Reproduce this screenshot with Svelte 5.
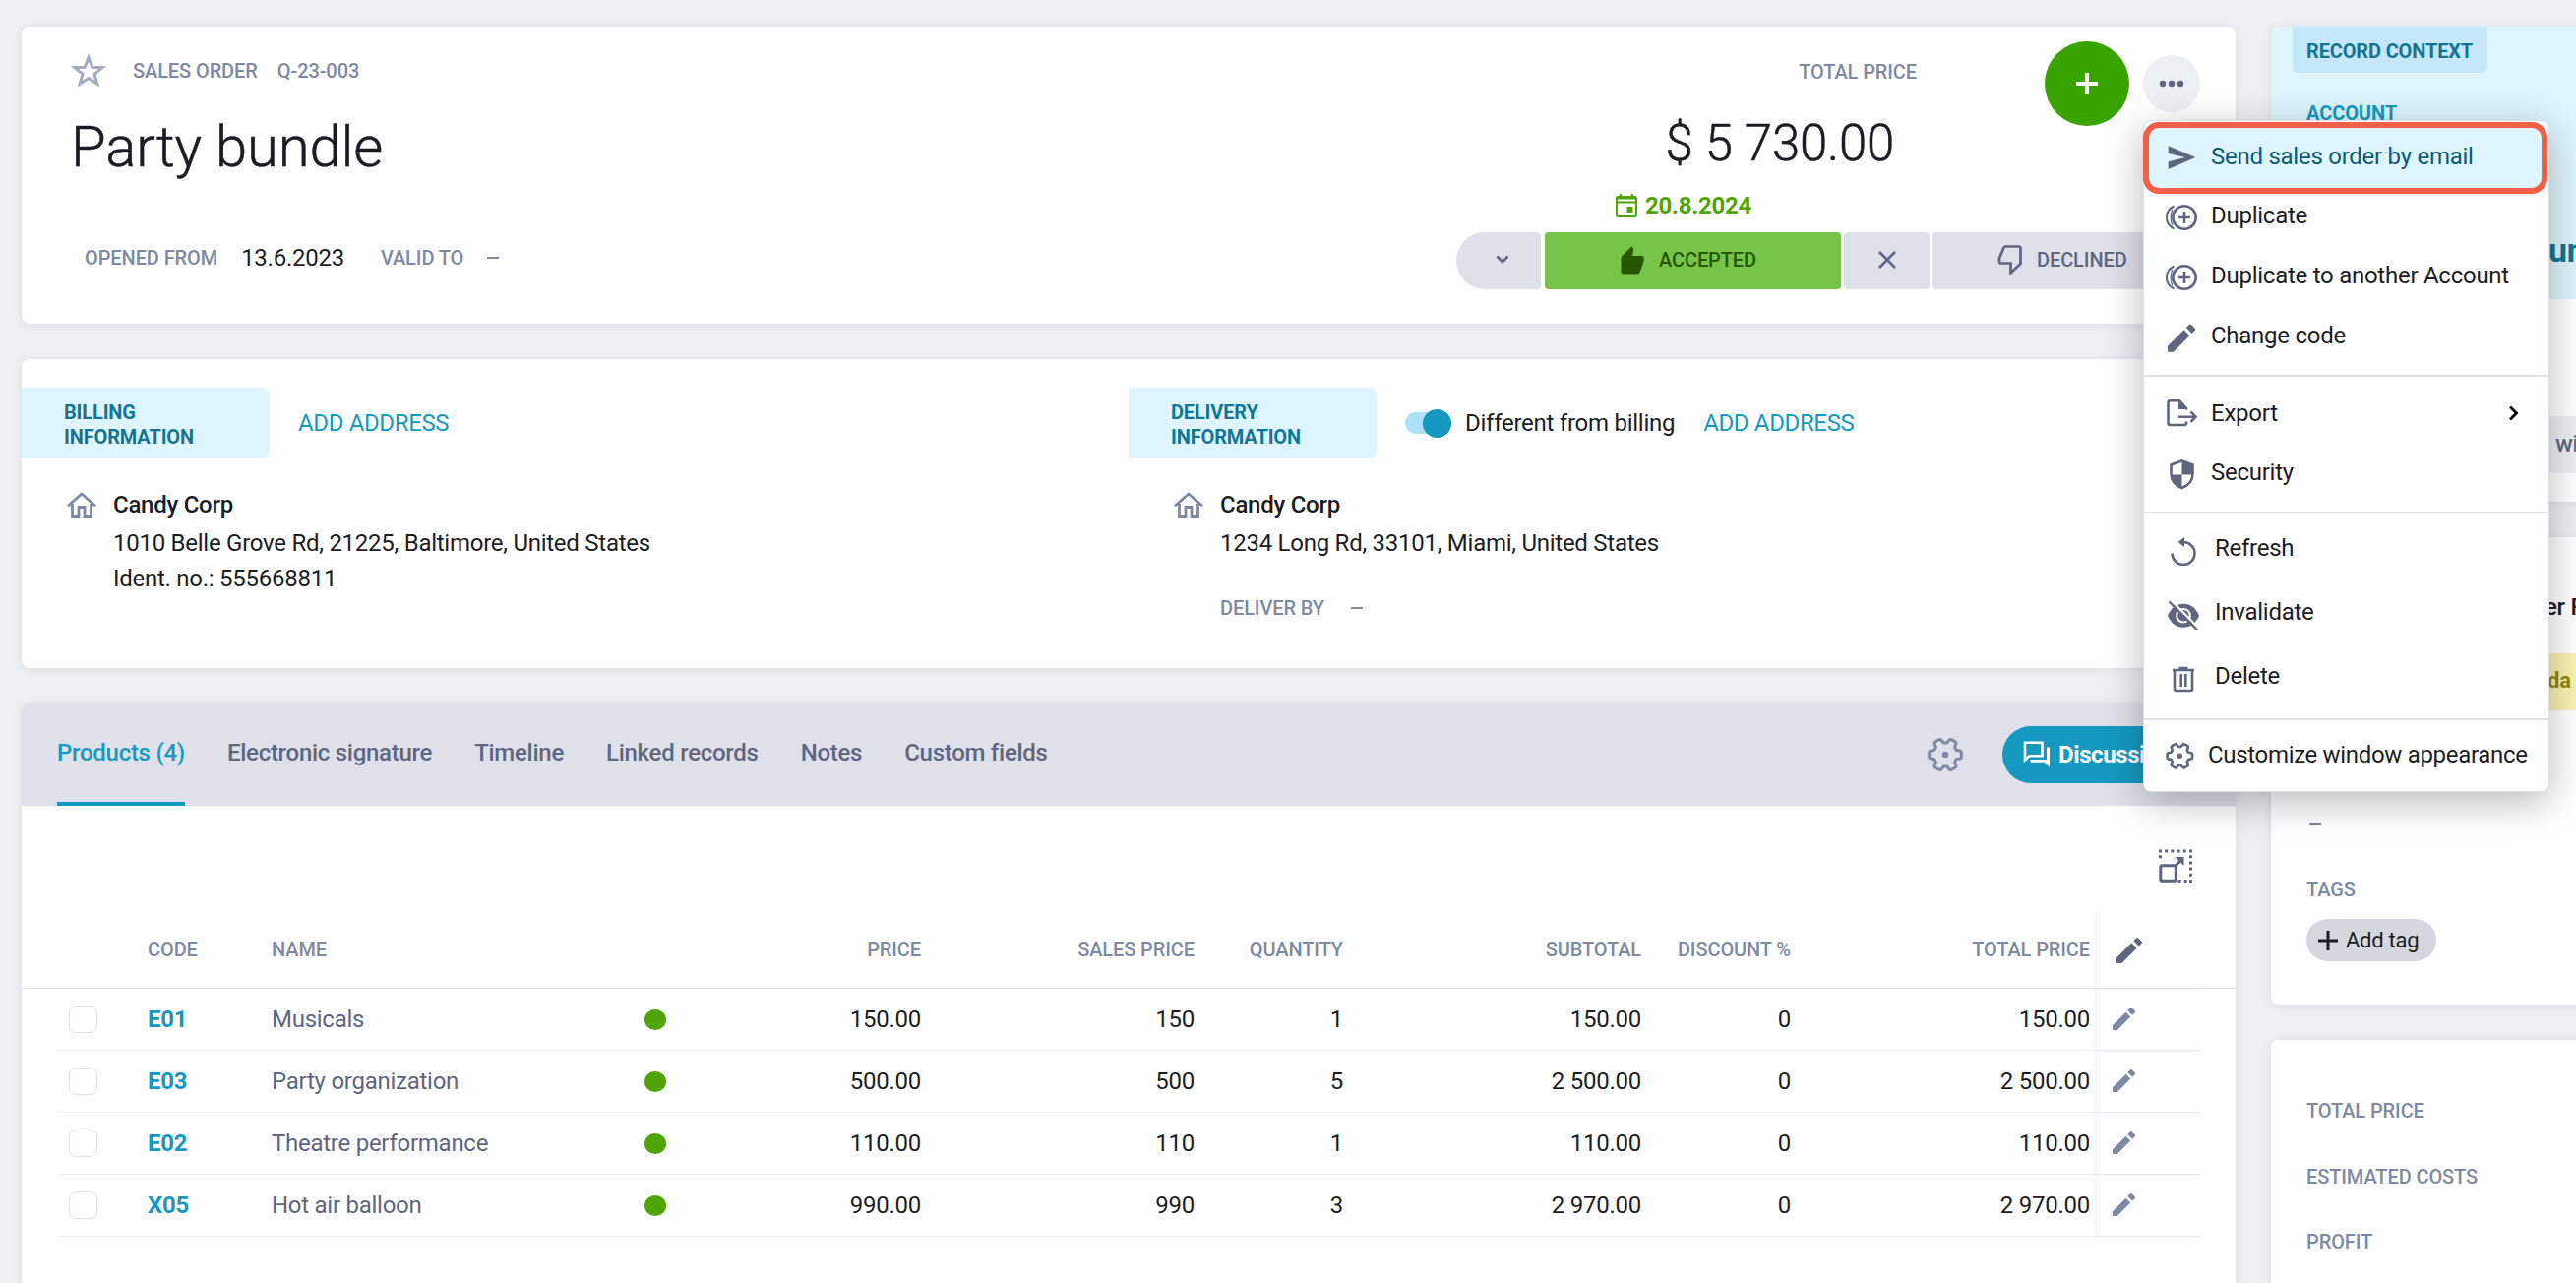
<script>
  const tabs = ["Products (4)", "Electronic signature", "Timeline", "Linked records", "Notes", "Custom fields"];
  let activeTab = $state(0);

  const products = [
    { code: "E01", name: "Musicals", price: "150.00", sales: "150", qty: 1, subtotal: "150.00", discount: 0, total: "150.00" },
    { code: "E03", name: "Party organization", price: "500.00", sales: "500", qty: 5, subtotal: "2 500.00", discount: 0, total: "2 500.00" },
    { code: "E02", name: "Theatre performance", price: "110.00", sales: "110", qty: 1, subtotal: "110.00", discount: 0, total: "110.00" },
    { code: "X05", name: "Hot air balloon", price: "990.00", sales: "990", qty: 3, subtotal: "2 970.00", discount: 0, total: "2 970.00" },
  ];

  const groups = [
    {
      cls: "main-actions",
      items: [
        { icon: "send", label: "Send sales order by email", active: true },
        { icon: "duplicate", label: "Duplicate" },
        { icon: "duplicate", label: "Duplicate to another Account" },
        { icon: "edit", label: "Change code" },
      ],
    },
    {
      cls: "data-actions",
      items: [
        { icon: "export", label: "Export", sub: true },
        { icon: "shield", label: "Security" },
      ],
    },
    {
      cls: "state-actions",
      items: [
        { icon: "refresh", label: "Refresh" },
        { icon: "hide", label: "Invalidate" },
        { icon: "trash", label: "Delete" },
      ],
    },
    { cls: "view-actions", items: [{ icon: "gear", label: "Customize window appearance" }] },
  ];

  // outline of the cog: six wide teeth with a notch on top
  function cog(r, depth) {
    let d = "";
    for (let i = 0; i < 120; i++) {
      const a = (i / 120) * Math.PI * 2;
      const k = Math.max(-1, Math.min(1, 0.5 - 2.2 * Math.cos(a * 6)));
      const rad = r + depth * k;
      d += (i ? "L" : "M") + (rad * Math.sin(a)).toFixed(2) + " " + (-rad * Math.cos(a)).toFixed(2);
    }
    return d + "Z";
  }
</script>

{#snippet pencil(size)}
  <svg width={size} height={size} viewBox="3 3 18 18" fill="currentColor">
    <path d="M3 17.25V21h3.75L17.3 10.45l-3.75-3.75L3 17.25zM20.71 7.04a1 1 0 0 0 0-1.41l-2.34-2.34a1 1 0 0 0-1.41 0L15 5.25 18.75 9l1.96-1.96z" />
  </svg>
{/snippet}

{#snippet house()}
  <svg class="house" width="30" height="26" viewBox="0 0 30 26" fill="none" stroke="currentColor" stroke-width="2.8">
    <path d="M1 14.2 15 2l14 12.2M5.5 12v12.500h6.500v-9h6v9h6.500V12" />
  </svg>
{/snippet}

{#snippet menuIcon(name)}
  <svg width="36" height="36" viewBox="0 0 36 36" fill="none" stroke="currentColor" stroke-width="2.6">
    {#if name === "send"}
      <path d="M3.700 7.300 31.300 19 3.700 31V23.200L21 19 3.700 15z" fill="currentColor" stroke="none" />
    {:else if name === "duplicate"}
      <circle cx="20" cy="20" r="11.700" />
      <path d="M20 14v12M14 20h12" />
      <path d="M9.500 8.500C4 11 2 15.500 2 20s2 9 7.500 11.500" stroke-width="2" />
      <path d="M8 11.500C5.500 16 5.500 24 8 28.500" stroke-width="1.200" />
    {:else if name === "edit"}
      <g transform="translate(3 6.500) scale(1.570) translate(-3 -3)" fill="currentColor" stroke="none">
        <path d="M3 17.250V21h3.750L17.300 10.450l-3.750-3.750L3 17.250zM20.710 7.040a1 1 0 0 0 0-1.410l-2.340-2.340a1 1 0 0 0-1.410 0L15 5.250 18.750 9l1.960-1.960z" />
      </g>
    {:else if name === "export"}
      <path d="M22 14.500V13l-7-7.700H5.500a2 2 0 0 0-2 2V28a2 2 0 0 0 2 2H20a2 2 0 0 0 2-2v-1.500" />
      <path d="M14 5v9h9z" fill="currentColor" stroke="none" />
      <path d="M14 21.700h17M26.500 16.500l5 5.200-5 5.200" />
    {:else if name === "shield"}
      <path d="M17.500 6.500 28.500 10.500v9c0 7-4.500 12-11 14.500-6.500-2.500-11-7.500-11-14.500v-9z" />
      <path d="M17.500 6v14.500h11.300V10.500zM17.500 20.500V34c-6-2-10.500-7-11.200-13.500z" fill="currentColor" stroke="none" />
    {:else if name === "refresh"}
      <path d="M7.500 23.500a11.500 11.500 0 1 0 11.500-11.500" />
      <path d="M20 7v10l-6.500-5z" fill="currentColor" stroke="none" />
    {:else if name === "hide"}
      <path d="M3 21.700C6 14 12 9.700 19 9.700s13 4.300 16 12c-3 7.700-9 12-16 12S6 29.400 3 21.700z" fill="currentColor" stroke="none" />
      <circle cx="19" cy="21.700" r="6.800" stroke="#fff" stroke-width="2" />
      <path d="M6.500 6 34.500 34.500" stroke="#fff" stroke-width="2.400" />
      <path d="M4.500 7.500 33 36.300" stroke-width="2.400" />
    {:else if name === "trash"}
      <path d="M10 13v18.500c0 1 .500 1.500 1.500 1.500h15c1 0 1.500-.500 1.500-1.500V13M8 12h22M14.500 10h9M16.700 16v13M21.300 16v13" />
    {:else if name === "gear"}
      <g transform="translate(15.300 19.300)">
        <path d={cog(11.100, 1.700)} stroke-linejoin="round" />
        <circle r="2.700" fill="currentColor" stroke="none" />
      </g>
    {/if}
  </svg>
{/snippet}

<div class="page">
  <main>
    <section class="card header">
      <div class="identity">
        <div class="crumb">
          <svg width="36" height="36" viewBox="0 0 36 36" fill="none" stroke="#a3abbe" stroke-width="3">
            <path d="M18 4.500 21.700 14.300 32 14.700 24 21.200 26.800 31.200 18 25.500 9.200 31.200 12 21.200 4 14.700 14.300 14.300z" />
          </svg>
          <span class="label">SALES ORDER</span>
          <span class="label">Q-23-003</span>
        </div>
        <h1>Party bundle</h1>
        <div class="validity">
          <span class="label">OPENED FROM</span>
          <span class="date">13.6.2023</span>
          <span class="label">VALID TO</span>
          <span class="dash"></span>
        </div>
      </div>

      <div class="deal">
        <div class="deal-top">
          <div class="sum">
            <span class="label">TOTAL PRICE</span>
            <strong>$ 5 730.00</strong>
          </div>
          <div class="actions">
            <button class="add" aria-label="Add">
              <svg width="22" height="22" viewBox="0 0 22 22" stroke="#fff" stroke-width="4"><path d="M11 0v22M0 11h22" /></svg>
            </button>
            <button class="more" aria-label="More">
              <svg width="26" height="8" viewBox="0 0 26 8" fill="currentColor">
                <circle cx="4" cy="4" r="3.200" /><circle cx="13" cy="4" r="3.200" /><circle cx="22" cy="4" r="3.200" />
              </svg>
            </button>
          </div>
        </div>
        <div class="closing">
          <svg width="24" height="26" viewBox="0 0 24 26" fill="none" stroke="currentColor" stroke-width="2">
            <rect x="2" y="4" width="20" height="20" rx="1.500" />
            <path d="M2 5.500h20M2 9.500h20M6 1v4M18 1v4" />
            <path d="M12.500 14h6v6h-6z" fill="currentColor" stroke="none" />
          </svg>
          20.8.2024
        </div>
        <div class="states">
          <button class="state first" aria-label="Previous states">
            <svg width="14" height="10" viewBox="0 0 14 10" fill="none" stroke="currentColor" stroke-width="2.600"><path d="M1.500 1.500 7 7.200l5.500-5.700" /></svg>
          </button>
          <button class="state accepted">
            <svg width="24" height="29" viewBox="0 0 24 29" fill="currentColor">
              <path d="M11.200.4 12.700 1.900q.6.700.4 1.600L12 10h9q2.700 0 2.700 2.700v2.500l-4 11.300Q18.900 28.500 17 28.500H3.200Q.5 28.500.5 25.700V12.200q0-1 .8-1.900z" />
            </svg>
            ACCEPTED
          </button>
          <button class="state close" aria-label="Cancel">
            <svg width="18" height="18" viewBox="0 0 18 18" stroke="currentColor" stroke-width="2.600"><path d="m1 1 16 16M17 1 1 17" /></svg>
          </button>
          <button class="state declined">
            <svg width="26" height="32" viewBox="0 0 26 32" fill="none" stroke="currentColor" stroke-width="2.700">
              <path d="M8 2.500h13.500q2 0 2 2V20L13.500 29.300V19.500H4q-2 0-2-2v-3L6.500 3.500Q7 2.500 8 2.500z" />
            </svg>
            DECLINED
          </button>
        </div>
      </div>
    </section>

    <section class="card addresses">
      <div class="address">
        <div class="address-head">
          <h2>BILLING<br />INFORMATION</h2>
          <a href="#billing">ADD ADDRESS</a>
        </div>
        <div class="address-body">
          {@render house()}
          <div>
            <p class="company">Candy Corp</p>
            <p>1010 Belle Grove Rd, 21225, Baltimore, United States</p>
            <p>Ident. no.: 555668811</p>
          </div>
        </div>
      </div>
      <div class="address">
        <div class="address-head">
          <h2>DELIVERY<br />INFORMATION</h2>
          <span class="toggle"><i></i></span>
          <span class="toggle-label">Different from billing</span>
          <a href="#delivery">ADD ADDRESS</a>
        </div>
        <div class="address-body">
          {@render house()}
          <div>
            <p class="company">Candy Corp</p>
            <p>1234 Long Rd, 33101, Miami, United States</p>
            <div class="deliver"><span class="label">DELIVER BY</span><span class="dash"></span></div>
          </div>
        </div>
      </div>
    </section>

    <section class="card records">
      <nav>
        {#each tabs as tab, i}
          <button class="tab" class:active={activeTab === i} onclick={() => (activeTab = i)}>{tab}</button>
        {/each}
        <svg class="settings" width="40" height="40" viewBox="-20 -20 40 40" fill="none" stroke="currentColor" stroke-width="3">
          <path d={cog(14.200, 2.200)} stroke-linejoin="round" />
          <circle r="3.200" fill="currentColor" stroke="none" />
        </svg>
        <button class="discuss">
          <svg width="28" height="28" viewBox="0 0 28 28" fill="none" stroke="currentColor" stroke-width="2.600">
            <path d="M2 1.800h17.500v13.500H6.500L2 19.300z" />
            <path d="M24 6.500h3v20.300l-5.200-5H7.500v-2.900H24z" fill="currentColor" stroke="none" />
          </svg>
          Discussion
        </button>
      </nav>
      <div class="toolbar">
        <svg width="36" height="36" viewBox="0 0 36 36" fill="none" stroke="currentColor">
          <path d="M1 3h34" stroke-width="3" stroke-dasharray="3 3.200" />
          <path d="M33.500 7.200v28M2.500 7.200v6" stroke-width="3" stroke-dasharray="3 3.200" />
          <path d="M20.500 33.500h12" stroke-width="3" stroke-dasharray="3 3.200" />
          <rect x="2.800" y="17.800" width="15.500" height="15.500" rx="1.500" stroke-width="3" />
          <path d="M18 18l7-7" stroke-width="3" />
          <path d="M17.500 9h9v9" stroke-width="0" fill="currentColor" />
        </svg>
      </div>
      <div class="row head">
        <span></span>
        <span>CODE</span>
        <span>NAME</span>
        <span></span>
        <span class="num">PRICE</span>
        <span class="num">SALES PRICE</span>
        <span class="num">QUANTITY</span>
        <span class="num">SUBTOTAL</span>
        <span class="num">DISCOUNT %</span>
        <span class="num">TOTAL PRICE</span>
        <span class="edit">{@render pencil(26)}</span>
      </div>
      <div class="rows">
        {#each products as p}
          <div class="row">
            <span class="check"><i></i></span>
            <a href="#{p.code}">{p.code}</a>
            <span class="name">{p.name}</span>
            <span class="dot"></span>
            <span class="num">{p.price}</span>
            <span class="num">{p.sales}</span>
            <span class="num">{p.qty}</span>
            <span class="num">{p.subtotal}</span>
            <span class="num">{p.discount}</span>
            <span class="num">{p.total}</span>
            <span class="edit">{@render pencil(23)}</span>
          </div>
        {/each}
      </div>
    </section>
  </main>

  <aside>
    <section class="card context">
      <div class="context-top">
        <h3>RECORD CONTEXT</h3>
        <h4>ACCOUNT</h4>
        <p class="account">un</p>
      </div>
      <div class="chip role">wi</div>
    </section>
    <section class="card details">
      <p class="owner">er F</p>
      <div class="chip state-chip">da</div>
      <span class="dash"></span>
      <span class="label tags">TAGS</span>
      <button class="tag">
        <svg width="20" height="20" viewBox="0 0 20 20" stroke="currentColor" stroke-width="3"><path d="M10 0v20M0 10h20" /></svg>
        Add tag
      </button>
    </section>
    <section class="card totals">
      <span class="label">TOTAL PRICE</span>
      <span class="label">ESTIMATED COSTS</span>
      <span class="label">PROFIT</span>
    </section>
  </aside>

  <div class="menu">
    <div class="ring"></div>
    {#each groups as group}
      <div class="group {group.cls}">
        {#each group.items as item}
          <button class="item" class:selected={item.active}>
            {@render menuIcon(item.icon)}
            <span>{item.label}</span>
            {#if item.sub}
              <svg class="arrow" width="12" height="16" viewBox="0 0 12 16" fill="none" stroke="#000" stroke-width="2.800"><path d="m2 1.500 6.500 6.500L2 14.500" /></svg>
            {/if}
          </button>
        {/each}
      </div>
    {/each}
  </div>
</div>

<style>
  :global(body) {
    margin: 0;
    overflow: hidden;
    background: #ecf0f3;
  }
  .page {
    position: relative;
    box-sizing: border-box;
    width: 2618px;
    height: 1304px;
    padding: 27px 0 0 22px;
    overflow: hidden;
    display: flex;
    gap: 36px;
    background: #ecf0f3;
    color: #1b1d24;
    font: 24px/40px Roboto, "Liberation Sans", sans-serif;
    letter-spacing: -0.26px;
  }
  h1, h2, h3, h4, p {
    margin: 0;
    font-weight: 400;
  }
  button {
    border: 0;
    padding: 0;
    background: none;
    color: inherit;
    font: inherit;
    letter-spacing: inherit;
  }
  a {
    color: #1599c0;
    text-decoration: none;
  }
  svg {
    flex: none;
  }
  main {
    flex: 0 0 2250px;
    display: flex;
    flex-direction: column;
    gap: 36px;
  }
  aside {
    flex: 0 0 340px;
    display: flex;
    flex-direction: column;
    gap: 36px;
  }
  .card {
    box-sizing: border-box;
    flex: none;
    border-radius: 8px;
    background: #fff;
    box-shadow: 0 1px 8px rgba(60, 70, 90, 0.1);
  }
  .label {
    color: #7e8aa3;
    font-size: 20px;
    font-weight: 500;
    letter-spacing: -0.1px;
  }
  .dash {
    width: 12px;
    height: 2px;
    background: #7e8aa3;
  }

  .header {
    height: 302px;
    display: flex;
    justify-content: space-between;
  }
  .identity {
    padding: 25px 0 0 50px;
  }
  .crumb {
    display: flex;
    align-items: center;
    gap: 20px;
  }
  .crumb svg {
    margin-right: 7px;
  }
  h1 {
    margin-top: 22px;
    font-size: 58px;
    font-weight: 300;
    line-height: 70px;
    letter-spacing: -0.15px;
    -webkit-text-stroke: 0.5px currentColor;
  }
  .validity {
    display: flex;
    align-items: center;
    margin: 57px 0 0 14px;
  }
  .validity .label {
    padding-top: 1px;
  }
  .date {
    margin: 0 37px 0 24px;
  }
  .validity .dash {
    margin-left: 24px;
  }
  .deal {
    width: 792px;
    padding-top: 15px;
  }
  .deal-top {
    display: flex;
    height: 147px;
  }
  .sum {
    width: 598px;
    box-sizing: border-box;
    padding: 11px 130px 0 0;
    display: flex;
    flex-direction: column;
    align-items: flex-end;
  }
  .sum strong {
    margin: 23px 23px 0 0;
    font-size: 51px;
    font-weight: 300;
    line-height: 60px;
    letter-spacing: -0.25px;
    -webkit-text-stroke: 0.5px currentColor;
  }
  .actions {
    height: 86px;
    display: flex;
    align-items: center;
    gap: 14px;
  }
  .actions button {
    display: grid;
    place-items: center;
    border-radius: 50%;
  }
  .add {
    width: 86px;
    height: 86px;
    background: #38a301;
  }
  .more {
    width: 58px;
    height: 58px;
    background: #ecf0f4;
    color: #5e6680;
  }
  .closing {
    display: flex;
    align-items: center;
    gap: 7px;
    padding-left: 161px;
    color: #4fa406;
    font-weight: 700;
  }
  .states {
    display: flex;
    gap: 4px;
    margin-top: 7px;
  }
  .state {
    display: flex;
    align-items: center;
    justify-content: center;
    box-sizing: border-box;
    height: 58px;
    padding-bottom: 2px;
    border-radius: 4px;
    background: #dee1e9;
    color: #5e6680;
    font-size: 20px;
    font-weight: 500;
    letter-spacing: -0.1px;
  }
  .first {
    width: 86px;
    padding-left: 8px;
    border-radius: 29px 4px 4px 29px;
  }
  .accepted {
    width: 301px;
    gap: 15px;
    padding-right: 9px;
    background: #76c549;
    color: #265600;
  }
  .close {
    width: 87px;
    margin-left: -1px;
  }
  .declined {
    width: 272px;
    gap: 14px;
    justify-content: flex-start;
    margin-left: -1px;
    padding-left: 66px;
  }

  .addresses {
    height: 314px;
    display: flex;
    padding-top: 29px;
  }
  .address {
    width: 1125px;
  }
  .address-head {
    height: 72px;
    display: flex;
    align-items: center;
  }
  h2 {
    box-sizing: border-box;
    width: 252px;
    height: 72px;
    margin-right: 29px;
    padding: 13px 0 0 43px;
    border-radius: 0 8px 8px 0;
    background: #def5fd;
    color: #127693;
    font-size: 20px;
    font-weight: 700;
    line-height: 25px;
    letter-spacing: -0.15px;
  }
  .address-head a {
    letter-spacing: -0.36px;
  }
  .toggle {
    display: flex;
    justify-content: flex-end;
    align-items: center;
    width: 47px;
    height: 22px;
    border-radius: 11px;
    background: #abe2fa;
  }
  .toggle i {
    width: 29px;
    height: 29px;
    border-radius: 50%;
    background: #1599c0;
  }
  .toggle-label {
    margin: 0 29px 0 14px;
  }
  .address-body {
    display: flex;
    gap: 17px;
    padding: 27px 0 0 46px;
    line-height: 36px;
  }
  .address-body .house {
    margin-top: 7px;
    color: #7e8aa3;
  }
  .company {
    margin: 2px 0 3px;
    font-weight: 500;
  }
  .deliver {
    display: flex;
    align-items: center;
    gap: 27px;
    margin-top: 30px;
  }

  .records {
    height: 640px;
  }
  nav {
    display: flex;
    height: 104px;
    padding-left: 36px;
    border-radius: 8px 8px 0 0;
    background: #dee1e9;
    color: #5e6680;
  }
  .tab {
    box-sizing: border-box;
    margin-right: 43px;
    padding-bottom: 1px;
    border-bottom: 4px solid transparent;
    font-weight: 500;
    letter-spacing: -0.27px;
  }
  .tab.active {
    border-color: #1599c0;
    color: #1599c0;
  }
  .settings {
    margin: 32px 38px 0 auto;
    color: #7e8aa3;
  }
  .discuss {
    display: flex;
    align-items: center;
    gap: 8px;
    box-sizing: border-box;
    width: 201px;
    height: 58px;
    margin: 23px 36px 0 0;
    padding-left: 21px;
    border-radius: 29px;
    background: #1599c0;
    color: #fff;
    font-weight: 700;
    letter-spacing: -0.4px;
    overflow: hidden;
  }
  .toolbar {
    display: flex;
    justify-content: flex-end;
    height: 65px;
    padding: 43px 43px 0 0;
    color: #5e6680;
  }
  .row {
    display: grid;
    grid-template-columns: 92px 126px 379px 60px 221px 278px 151px 303px 152px 304px 112px;
    align-items: center;
    height: 62px;
    border-bottom: 1px solid #ebeef2;
  }
  .rows {
    padding: 0 36px;
  }
  .row.head {
    height: 77px;
    padding: 0 36px;
    border-bottom-color: #dbdfe6;
    color: #7e8aa3;
    font-size: 20px;
    font-weight: 500;
    letter-spacing: -0.1px;
  }
  .head > span {
    padding-bottom: 1px;
  }
  .num {
    text-align: right;
  }
  .name {
    color: #5e6680;
  }
  .row a {
    font-weight: 700;
  }
  .check {
    display: flex;
    padding-left: 12px;
  }
  .check i {
    box-sizing: border-box;
    width: 29px;
    height: 28px;
    border: 1px solid #dee1e9;
    border-radius: 7px;
  }
  .dot {
    width: 22px;
    height: 21px;
    border-radius: 50%;
    background: #4fa406;
  }
  .edit {
    display: flex;
    align-items: center;
    align-self: stretch;
    margin-left: 4px;
    padding-left: 12px;
    border-left: 7px solid #f9f9f9;
    box-shadow: 0 2px 3px rgba(0, 0, 0, 0.03);
    color: #7e8aa3;
  }
  .edit :global(svg) {
    margin-bottom: 2px;
  }
  .head .edit {
    padding: 0 0 0 16px;
    color: #5e6680;
  }
  .head .edit :global(svg) {
    margin-bottom: 0;
  }

  .context {
    height: 483px;
    overflow: hidden;
  }
  .context-top {
    height: 277px;
    padding-left: 22px;
    background: #def5fd;
  }
  h3 {
    box-sizing: border-box;
    width: 198px;
    height: 47px;
    padding-left: 14px;
    border-radius: 0 0 6px 6px;
    background: #c4e7f9;
    color: #127693;
    font-size: 20px;
    font-weight: 700;
    line-height: 50px;
    letter-spacing: -0.15px;
  }
  h4 {
    padding: 21px 0 0 14px;
    color: #1599c0;
    font-size: 20px;
    font-weight: 700;
    letter-spacing: -0.1px;
  }
  .account {
    margin: 99px 0 0 260px;
    color: #127693;
    font-size: 34px;
    font-weight: 700;
  }
  .chip {
    box-sizing: border-box;
    height: 58px;
    margin-left: 230px;
    padding-left: 51px;
    font-weight: 500;
    line-height: 56px;
  }
  .role {
    margin-top: 119px;
    padding-left: 59px;
    background: #ecf0f4;
    color: #5e6680;
  }
  .state-chip {
    background: #faf2b2;
    color: #94860c;
    font-size: 22px;
    font-weight: 700;
  }
  .details {
    height: 475px;
    display: flex;
    flex-direction: column;
  }
  .owner {
    margin: 51px 0 27px 278px;
    font-weight: 500;
  }
  .details .dash {
    margin: 114px 0 0 39px;
  }
  .tags {
    margin: 46px 0 0 36px;
  }
  .tag {
    display: flex;
    align-items: center;
    gap: 8px;
    box-sizing: border-box;
    width: 132px;
    height: 43px;
    margin: 10px 0 0 36px;
    padding-left: 12px;
    border-radius: 22px;
    background: #d5d7df;
    font-size: 22px;
  }
  .totals {
    height: 300px;
    display: flex;
    flex-direction: column;
    gap: 26.500px;
    padding: 52px 0 0 36px;
  }

  .menu {
    position: absolute;
    top: 122px;
    left: 2178px;
    box-sizing: border-box;
    width: 413px;
    height: 683px;
    padding-top: 6px;
    border: 1px solid #dbdfe8;
    border-radius: 8px;
    background: #fff;
    box-shadow: 0 10px 40px rgba(0, 0, 0, 0.28);
  }
  .ring {
    position: absolute;
    top: 1px;
    left: -1px;
    box-sizing: border-box;
    width: 411px;
    height: 73px;
    border: 6px solid #f15f48;
    border-radius: 16px;
    background: #def5fd;
  }
  .group {
    position: relative;
    border-bottom: 2px solid #dee1e9;
  }
  .item {
    display: flex;
    align-items: center;
    width: 100%;
    height: 61px;
    padding-left: 21px;
    text-align: left;
  }
  .item :global(svg) {
    color: #5e6680;
  }
  .item span {
    margin-left: 11px;
    white-space: nowrap;
  }
  .selected {
    height: 59px;
    color: #0a5a70;
  }
  .main-actions {
    padding-bottom: 10px;
  }
  .data-actions {
    padding: 7px 0 10px;
    border-bottom-width: 1px;
  }
  .data-actions .item {
    height: 60px;
  }
  .state-actions {
    padding: 3px 0 11px;
  }
  .state-actions .item {
    height: 65px;
  }
  .state-actions span {
    margin-left: 15px;
  }
  .view-actions {
    border-bottom: 0;
  }
  .view-actions .item {
    height: 69px;
  }
  .view-actions span {
    margin-left: 8px;
    letter-spacing: -0.32px;
  }
  .arrow {
    margin: 0 29px 0 auto;
  }
</style>
